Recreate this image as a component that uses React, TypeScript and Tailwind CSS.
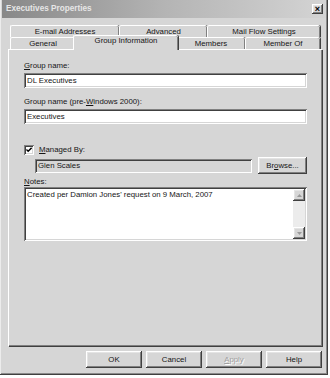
import React from "react";

const raised =
  "shadow-[inset_-1px_-1px_0_#404040,inset_1px_1px_0_#ffffff,inset_-2px_-2px_0_#808080,inset_2px_2px_0_#e4e4e4]";
const sunken =
  "shadow-[inset_1px_1px_0_#808080,inset_-1px_-1px_0_#ffffff,inset_2px_2px_0_#404040,inset_-2px_-2px_0_#d6d6d6]";

function Tab({ label, w, selected }: { label: string; w: number; selected?: boolean }) {
  if (selected) {
    return (
      <div
        className="relative z-10 -mx-[2px] -mt-[2px] -mb-[1px] flex h-[15px] items-start justify-center rounded-t-[2px] border-t border-l border-white bg-[#d6d6d6] pt-[1px] shadow-[inset_-1px_0_0_#808080,1px_0_0_#404040]"
        style={{ width: w + 4 }}
      >
        {label}
      </div>
    );
  }
  return (
    <div
      className="flex h-[12px] items-center justify-center rounded-t-[2px] border-t border-l border-white bg-[#d6d6d6] shadow-[inset_-1px_0_0_#808080,1px_0_0_#404040]"
      style={{ width: w }}
    >
      {label}
    </div>
  );
}

function Btn({ children, disabled }: { children: React.ReactNode; disabled?: boolean }) {
  return (
    <div
      className={`flex h-[17px] w-[56px] items-center justify-center bg-[#d6d6d6] ${raised} ${
        disabled ? "text-[#a0a0a0] [text-shadow:1px_1px_0_#ffffff]" : ""
      }`}
    >
      {children}
    </div>
  );
}

function Arrow({ up }: { up?: boolean }) {
  return (
    <div className={`flex h-[12px] w-[12px] items-center justify-center bg-[#d6d6d6] ${raised}`}>
      <svg width="5" height="3" viewBox="0 0 5 3">
        <path d={up ? "M2.5 0 L5 3 L0 3 Z" : "M0 0 L5 0 L2.5 3 Z"} fill="#9a9a9a" />
      </svg>
    </div>
  );
}

export default function App() {
  return (
    <div className="h-[378px] w-[330px] overflow-hidden bg-white font-['Liberation_Sans',Arial,sans-serif] text-[7.8px] leading-none text-[#151515]">
      <div className="flex h-[375px] w-[328px] flex-col bg-[#d6d6d6] px-[2px] shadow-[inset_-1px_-1px_0_#404040,inset_1px_0_0_#ececec,inset_-2px_-2px_0_#8a8a8a]">
        <div className="flex h-[18px] items-center justify-between bg-linear-to-r from-[#888888] via-[#b4b4b4] to-[#d4d4d4] pl-[4px] pr-[3px]">
          <span className="text-[8.2px] font-bold text-[#e6e6e6]">Executives Properties</span>
          <div className={`flex h-[10px] w-[11px] items-center justify-center bg-[#d6d6d6] text-[9px] font-bold text-black ${raised}`}>
            ×
          </div>
        </div>

        <div className="mt-[7px] ml-[8px] flex">
          <Tab label="E-mail Addresses" w={109} />
          <Tab label="Advanced" w={88} />
          <Tab label="Mail Flow Settings" w={113} />
        </div>
        <div className="ml-[8px] flex items-end">
          <Tab label="General" w={65} />
          <Tab label="Group Information" w={101} selected />
          <Tab label="Members" w={69} />
          <Tab label="Member Of" w={75} />
        </div>

        <div className="ml-[6px] flex h-[297px] w-[314px] flex-col border-t border-l border-white bg-[#d6d6d6] px-[15px] shadow-[inset_-1px_-1px_0_#808080,1px_1px_0_#404040]">
          <div className="mt-[11px] h-[10px] leading-[10px]">
            <span className="underline">G</span>roup name:
          </div>
          <div className={`mt-[2px] flex h-[15px] items-center bg-white pl-[3px] ${sunken}`}>DL Executives</div>

          <div className="mt-[9px] h-[10px] leading-[10px]">
            Group name (pre-<span className="underline">W</span>indows 2000):
          </div>
          <div className={`mt-[2px] flex h-[15px] items-center bg-white pl-[3px] ${sunken}`}>Executives</div>

          <div className="mt-[21px] flex h-[10px] items-center gap-[5px]">
            <div className={`flex h-[10px] w-[10px] items-center justify-center bg-white ${sunken}`}>
              <svg width="6" height="6" viewBox="0 0 7 7">
                <path d="M0.5 3 L2.5 5 L6.5 1" stroke="#000" strokeWidth="1.6" fill="none" />
              </svg>
            </div>
            <span>
              <span className="underline">M</span>anaged By:
            </span>
          </div>

          <div className="mt-[2px] flex h-[17px] items-center">
            <div className={`ml-[11px] flex h-[14px] w-[217px] items-center bg-[#d6d6d6] pl-[3px] ${sunken}`}>
              Glen Scales
            </div>
            <div className={`ml-auto flex h-[17px] w-[49px] items-center justify-center ${raised}`}>
              Br<span className="underline">o</span>wse...
            </div>
          </div>

          <div className="mt-[3px] h-[9px] leading-[9px]">
            <span className="underline">N</span>otes:
          </div>
          <div className={`mt-[1px] flex h-[54px] bg-white p-[2px] ${sunken}`}>
            <div className="flex-1 pt-[2px] pl-[1px]">Created per Damion Jones' request on 9 March, 2007</div>
            <div className="flex w-[12px] flex-col justify-between bg-[#ececec]">
              <Arrow up />
              <Arrow />
            </div>
          </div>
        </div>

        <div className="mt-[5px] flex w-[320px] justify-end gap-[4px]">
          <Btn>OK</Btn>
          <Btn>Cancel</Btn>
          <Btn disabled>
            <span className="underline">A</span>pply
          </Btn>
          <Btn>Help</Btn>
        </div>
      </div>
    </div>
  );
}
